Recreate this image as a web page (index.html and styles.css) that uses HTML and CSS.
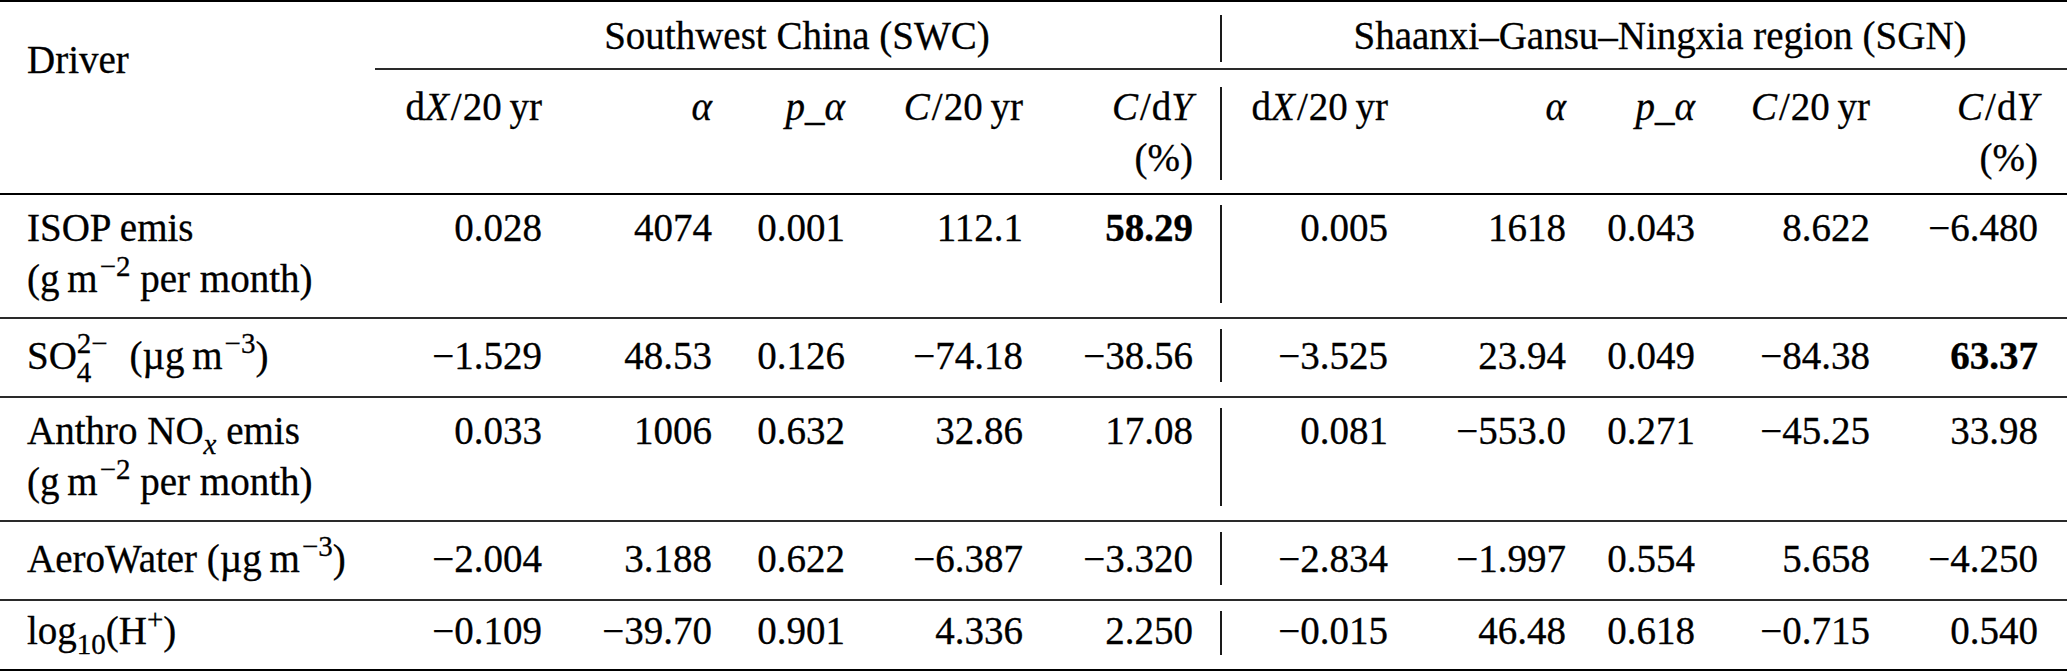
FILE: index.html
```html
<!DOCTYPE html>
<html lang="en">
<head>
<meta charset="utf-8">
<title>Drivers table</title>
<link rel="stylesheet" href="styles.css">
</head>
<body>
<table class="tbl">
  <colgroup>
    <col class="c-driver">
    <col class="c-dx">
    <col class="c-a">
    <col class="c-p">
    <col class="c-c">
    <col class="c-cy">
    <col class="c-vl">
    <col class="c-dx2">
    <col class="c-a2">
    <col class="c-p2">
    <col class="c-c2">
    <col class="c-cy2">
  </colgroup>
  <thead>
    <tr class="hr1">
      <th class="driver" rowspan="2">Driver</th>
      <th class="group swc" colspan="5">Southwest China (SWC)</th>
      <th class="group vl vl-h1"></th>
      <th class="group sgn" colspan="5">Shaanxi–Gansu–Ningxia region (SGN)</th>
    </tr>
    <tr class="hr2">
      <th>d<i>X</i><span class="sl">/</span>20&#8201;yr</th>
      <th><i>α</i></th>
      <th><i>p</i>_<i>α</i></th>
      <th><i>C</i><span class="sl">/</span>20&#8201;yr</th>
      <th><i>C</i><span class="sl">/</span>d<i>Y</i><br>(%)</th>
      <th class="vl vl-h2"></th>
      <th>d<i>X</i><span class="sl">/</span>20&#8201;yr</th>
      <th><i>α</i></th>
      <th><i>p</i>_<i>α</i></th>
      <th><i>C</i><span class="sl">/</span>20&#8201;yr</th>
      <th class="last"><i>C</i><span class="sl">/</span>d<i>Y</i><br>(%)</th>
    </tr>
  </thead>
  <tbody>
    <tr class="r-two">
      <td class="name">ISOP emis<br>(g&#8201;m<sup>−2</sup> per month)</td>
      <td>0.028</td><td>4074</td><td>0.001</td><td>112.1</td><td><b>58.29</b></td>
      <td class="vl"></td>
      <td>0.005</td><td>1618</td><td>0.043</td><td>8.622</td><td class="last">−6.480</td>
    </tr>
    <tr class="r-sup">
      <td class="name">SO<sub class="st-sub">4</sub><sup class="st-sup">2−</sup> (µg&#8201;m<sup>−3</sup>)</td>
      <td>−1.529</td><td>48.53</td><td>0.126</td><td>−74.18</td><td>−38.56</td>
      <td class="vl"></td>
      <td>−3.525</td><td>23.94</td><td>0.049</td><td>−84.38</td><td class="last"><b>63.37</b></td>
    </tr>
    <tr class="r-two">
      <td class="name">Anthro NO<sub><i>x</i></sub> emis<br>(g&#8201;m<sup>−2</sup> per month)</td>
      <td>0.033</td><td>1006</td><td>0.632</td><td>32.86</td><td>17.08</td>
      <td class="vl"></td>
      <td>0.081</td><td>−553.0</td><td>0.271</td><td>−45.25</td><td class="last">33.98</td>
    </tr>
    <tr class="r-sup">
      <td class="name">AeroWater (µg&#8201;m<sup>−3</sup>)</td>
      <td>−2.004</td><td>3.188</td><td>0.622</td><td>−6.387</td><td>−3.320</td>
      <td class="vl"></td>
      <td>−2.834</td><td>−1.997</td><td>0.554</td><td>5.658</td><td class="last">−4.250</td>
    </tr>
    <tr class="r-end">
      <td class="name">log<sub>10</sub>(H<sup class="plus">+</sup>)</td>
      <td>−0.109</td><td>−39.70</td><td>0.901</td><td>4.336</td><td>2.250</td>
      <td class="vl"></td>
      <td>−0.015</td><td>46.48</td><td>0.618</td><td>−0.715</td><td class="last">0.540</td>
    </tr>
  </tbody>
</table>
</body>
</html>
```

FILE: styles.css
```css
html, body {
  margin: 0;
  padding: 0;
  background: #ffffff;
  color: #000000;
}

.tbl {
  width: 2067px;
  table-layout: fixed;
  border-collapse: separate;
  border-spacing: 0;
  font-family: "Liberation Serif", "Times New Roman", serif;
  font-size: 39px;
  line-height: 51px;
  -webkit-text-stroke: 0.3px #000;
}

.c-driver { width: 375px; }
.c-dx { width: 167px; }
.c-a { width: 170px; }
.c-p { width: 133px; }
.c-c { width: 178px; }
.c-cy { width: 170px; }
.c-vl { width: 56px; }
.c-dx2 { width: 139px; }
.c-a2 { width: 178px; }
.c-p2 { width: 129px; }
.c-c2 { width: 175px; }
.c-cy2 { width: 197px; }

.tbl th,
.tbl td {
  padding: 0;
  font-weight: normal;
  vertical-align: top;
  text-align: right;
  white-space: nowrap;
}

.tbl i {
  font-style: italic;
}

.tbl b {
  font-weight: bold;
}

.tbl .last {
  padding-right: 29px;
}

.sl {
  margin: 0 1px 0 2px;
}

/* header row 1 */
.hr1 th {
  border-top: 2px solid #000;
  padding-top: 8px;
  padding-bottom: 7px;
}

.hr1 .group {
  border-bottom: 2px solid #2a2a2a;
  text-align: center;
}

.hr1 .swc {
  padding-left: 26px;
}

.hr1 .sgn {
  padding-left: 4px;
}

.tbl th.driver {
  text-align: left;
  padding-left: 27px;
  padding-top: 32px;
  border-bottom: 2px solid #000;
}

/* header row 2 */
.hr2 th {
  padding-top: 11px;
  padding-bottom: 10px;
  border-bottom: 2px solid #000;
}

/* body rows */
.tbl td {
  border-bottom: 2px solid #2a2a2a;
}

.tbl td.name {
  text-align: left;
  padding-left: 27px;
}

.r-two td {
  padding-top: 7px;
  padding-bottom: 13px;
}

.r-sup td {
  padding-top: 11px;
  padding-bottom: 15px;
}

.r-end td {
  padding-top: 4px;
  padding-bottom: 13px;
  border-bottom-color: #000;
}

/* vertical separator between the two regions */
.vl {
  position: relative;
}

.vl::before {
  content: "";
  position: absolute;
  left: 27px;
  width: 2px;
  top: 10px;
  bottom: 14px;
  background: #1a1a1a;
}

.vl-h1::before {
  top: 13px;
  bottom: 6px;
}

.vl-h2::before {
  top: 17px;
  bottom: 13px;
}

/* super / subscripts */
.tbl sup,
.tbl sub {
  font-size: 29px;
  line-height: 0;
}

.tbl sup {
  vertical-align: 16px;
  margin-left: 2px;
}

.tbl sub {
  vertical-align: -10px;
}

.tbl sub.st-sub {
  vertical-align: -13px;
}

.tbl sup.st-sup {
  margin-left: -14.5px;
  margin-right: 12px;
}

.tbl sup.plus {
  vertical-align: 15px;
  margin-left: 0;
}
```
